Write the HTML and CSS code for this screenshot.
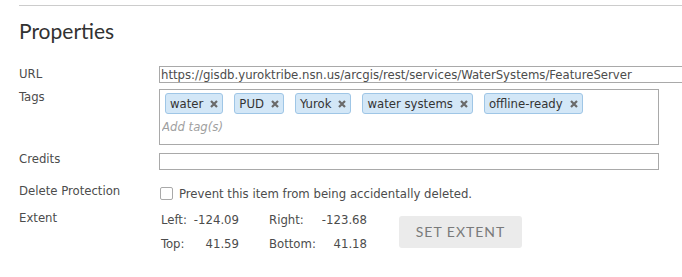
FILE: index.html
```html
<!DOCTYPE html>
<html>
<head>
  <meta charset="UTF-8">
  <title>Item Properties</title>
  <link rel="stylesheet" href="styles.css">
</head>
<body>
  <div class="page">
    <div class="divider"></div>
    <h1 class="title">Properties</h1>

    <div class="form">
      <div class="row row-url">
        <div class="label">URL</div>
        <div class="field">
          <input type="text" class="text-input url-input" value="https://gisdb.yuroktribe.nsn.us/arcgis/rest/services/WaterSystems/FeatureServer">
        </div>
      </div>

      <div class="row row-tags">
        <div class="label">Tags</div>
        <div class="field">
          <div class="tag-box">
            <div class="tag-list">
              <span class="tag">water<span class="tag-remove"><svg width="8" height="8" viewBox="0 0 8 8"><path d="M1 1L7 7M7 1L1 7"/></svg></span></span>
              <span class="tag">PUD<span class="tag-remove"><svg width="8" height="8" viewBox="0 0 8 8"><path d="M1 1L7 7M7 1L1 7"/></svg></span></span>
              <span class="tag">Yurok<span class="tag-remove"><svg width="8" height="8" viewBox="0 0 8 8"><path d="M1 1L7 7M7 1L1 7"/></svg></span></span>
              <span class="tag">water systems<span class="tag-remove"><svg width="8" height="8" viewBox="0 0 8 8"><path d="M1 1L7 7M7 1L1 7"/></svg></span></span>
              <span class="tag">offline-ready<span class="tag-remove"><svg width="8" height="8" viewBox="0 0 8 8"><path d="M1 1L7 7M7 1L1 7"/></svg></span></span>
            </div>
            <input type="text" class="tag-input" placeholder="Add tag(s)">
          </div>
        </div>
      </div>

      <div class="row row-credits">
        <div class="label">Credits</div>
        <div class="field">
          <input type="text" class="text-input" value="">
        </div>
      </div>

      <div class="row row-delete">
        <div class="label">Delete Protection</div>
        <div class="field check-field">
          <input type="checkbox" id="delete-protect" class="checkbox">
          <label for="delete-protect" class="check-text">Prevent this item from being accidentally deleted.</label>
        </div>
      </div>

      <div class="row row-extent">
        <div class="label">Extent</div>
        <div class="field extent-field">
          <div class="extent-grid">
            <span class="ext-key">Left:</span><span class="ext-val">-124.09</span>
            <span class="ext-key ext-key-right">Right:</span><span class="ext-val">-123.68</span>
            <span class="ext-key">Top:</span><span class="ext-val">41.59</span>
            <span class="ext-key ext-key-right">Bottom:</span><span class="ext-val">41.18</span>
          </div>
          <button class="extent-button">Set Extent</button>
        </div>
      </div>
    </div>
  </div>
</body>
</html>
```

FILE: styles.css
```css
body {
  margin: 0;
  background-color: #fff;
  font-family: 'DejaVu Sans Condensed', 'DejaVu Sans', sans-serif;
  font-size: 13px;
  color: #4c4c4c;
  overflow: hidden;
}

.page {
  padding: 5px 0 0 19px;
}

.divider {
  border-top: 1px solid #ccc;
}

.title {
  margin: 12px 0 23px 0;
  font-family: Lato, 'Open Sans', sans-serif;
  font-size: 21px;
  font-weight: 400;
  line-height: 25px;
  color: #323232;
}

.row {
  display: flex;
  align-items: flex-start;
}

.label {
  width: 140px;
  flex-shrink: 0;
  line-height: 15px;
}

.field {
  width: 500px;
}

.row-tags {
  margin-top: 6px;
}

.row-credits {
  margin-top: 8px;
}

.row-credits .label {
  margin-top: -2px;
}

.row-delete {
  margin-top: 13px;
}

.row-extent {
  margin-top: 9px;
}

.text-input {
  box-sizing: border-box;
  width: 500px;
  height: 17px;
  margin: 0;
  padding: 0 1px;
  border: 1px solid #a9a9a9;
  font-family: inherit;
  font-size: 13px;
  color: #4c4c4c;
  outline: none;
}

.url-input {
  width: 524px; /* runs to the window edge, past the other fields */
}

.tag-box {
  box-sizing: border-box;
  height: 56px;
  border: 1px solid #a9a9a9;
  padding: 3px 5px 0 5px;
}

.tag-list {
  display: flex;
  gap: 11px;
}

.tag {
  display: flex;
  align-items: center;
  height: 21px;
  box-sizing: border-box;
  padding: 0 4px;
  background-color: #d3e7f7;
  border: 1px solid #9fc6e6;
  border-radius: 3px;
  color: #333;
  white-space: nowrap;
}

.tag-remove {
  display: flex;
  margin-left: 7px;
}

.tag-remove path {
  stroke: #6a6a6a;
  stroke-width: 2.2;
}

.tag-input {
  display: block;
  margin: 4px 0 0 -3px;
  padding: 0;
  border: none;
  height: 17px;
  font-family: inherit;
  font-size: 13px;
  font-style: italic;
  outline: none;
}

.tag-input::placeholder {
  color: #a0a0a0;
}

.check-field {
  display: flex;
  align-items: flex-start;
}

.checkbox {
  appearance: none;
  width: 13px;
  height: 13px;
  margin: 4px 0 0 1px;
  border: 1px solid #a9a9a9;
  border-radius: 2px;
  background: #fff;
}

.check-text {
  margin-left: 6px;
  padding-top: 3px;
  line-height: 15px;
}

.extent-field {
  display: flex;
  align-items: flex-start;
}

.extent-grid {
  display: grid;
  grid-template-columns: 31px 47px 81px 47px;
  margin: -2px 0 0 2px;
  line-height: 24px;
}

.ext-val {
  text-align: right;
  white-space: nowrap;
}

.ext-key-right {
  padding-left: 30px;
}

.extent-button {
  width: 123px;
  height: 32px;
  margin: 6px 0 0 32px;
  padding: 0 0 2px 0;
  border: none;
  border-radius: 3px;
  background-color: #ebebeb;
  color: #7a7a7a;
  font-family: Lato, 'Open Sans', sans-serif;
  font-size: 14px;
  letter-spacing: 1px;
  text-transform: uppercase;
}
```
